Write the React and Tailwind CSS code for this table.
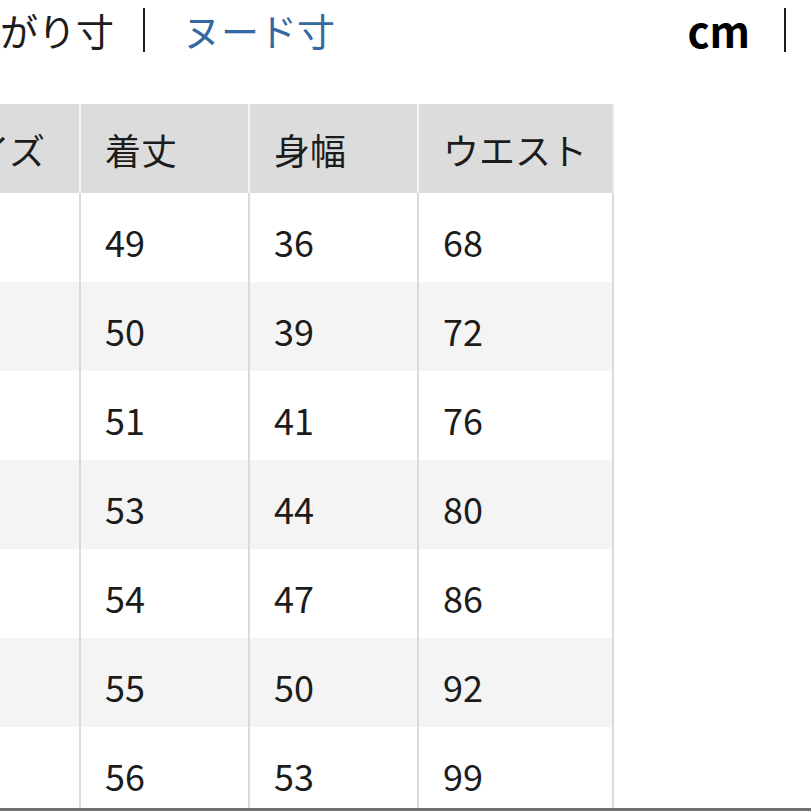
import React from 'react';

const rows = [
    { size: 'XS', length: 49, width: 36, waist: 68 },
    { size: 'S', length: 50, width: 39, waist: 72 },
    { size: 'M', length: 51, width: 41, waist: 76 },
    { size: 'L', length: 53, width: 44, waist: 80 },
    { size: 'XL', length: 54, width: 47, waist: 86 },
    { size: 'XXL', length: 55, width: 50, waist: 92 },
    { size: '3XL', length: 56, width: 53, waist: 99 },
];

const font = { fontFamily: '"Noto Sans CJK JP", "Noto Sans", sans-serif' };

const App = () => {
    return (
        <div
            className="w-[811px] h-[811px] overflow-hidden bg-white border-b-[3px] border-[#6f6f6f] text-[#1c1c1c]"
            style={font}
        >
            {/* unit switcher */}
            <div className="h-[60px] flex items-center">
                <div className="-ml-[76px] flex items-center text-[38px] leading-none whitespace-nowrap">
                    <span>仕上がり寸</span>
                    <span className="ml-[29px] mr-[38px] w-[2px] h-[44px] bg-[#1c1c1c]" />
                    <span className="text-[#3368a0]">ヌード寸</span>
                </div>
                <div className="ml-auto pr-[25px] flex items-center">
                    <span className="text-[42px] font-bold leading-none text-black">cm</span>
                    <span className="ml-[34px] w-[2px] h-[44px] bg-[#1c1c1c]" />
                </div>
            </div>

            {/* size table */}
            <div className="mt-[44px] -ml-[86px] w-[700px] text-[36px] leading-none">
                <div className="flex h-[89px] bg-[#dcdcdc]">
                    <div className="w-[167px] pl-[24px] flex items-center border-r-2 border-[#f3f3f3]">サイズ</div>
                    <div className="w-[169px] pl-[24px] flex items-center border-r-2 border-[#f3f3f3]">着丈</div>
                    <div className="w-[169px] pl-[24px] flex items-center border-r-2 border-[#f3f3f3]">身幅</div>
                    <div className="w-[195px] pl-[24px] flex items-center border-r-2 border-[#e8e8e8]">ウエスト</div>
                </div>
                {rows.map((r, idx) => (
                    <div
                        key={r.size}
                        className={`flex h-[89px] ${idx % 2 === 1 ? 'bg-[#f4f4f4]' : 'bg-white'}`}
                    >
                        <div className="w-[167px] pl-[24px] flex items-center border-r-2 border-[#dadada]">
                            <span className="opacity-0">{r.size}</span>
                        </div>
                        <div className="w-[169px] pl-[24px] pt-[6px] flex items-center border-r-2 border-[#dadada]">{r.length}</div>
                        <div className="w-[169px] pl-[24px] pt-[6px] flex items-center border-r-2 border-[#dadada]">{r.width}</div>
                        <div className="w-[195px] pl-[24px] pt-[6px] flex items-center border-r-2 border-[#dadada]">{r.waist}</div>
                    </div>
                ))}
            </div>
        </div>
    );
};

export default App;
